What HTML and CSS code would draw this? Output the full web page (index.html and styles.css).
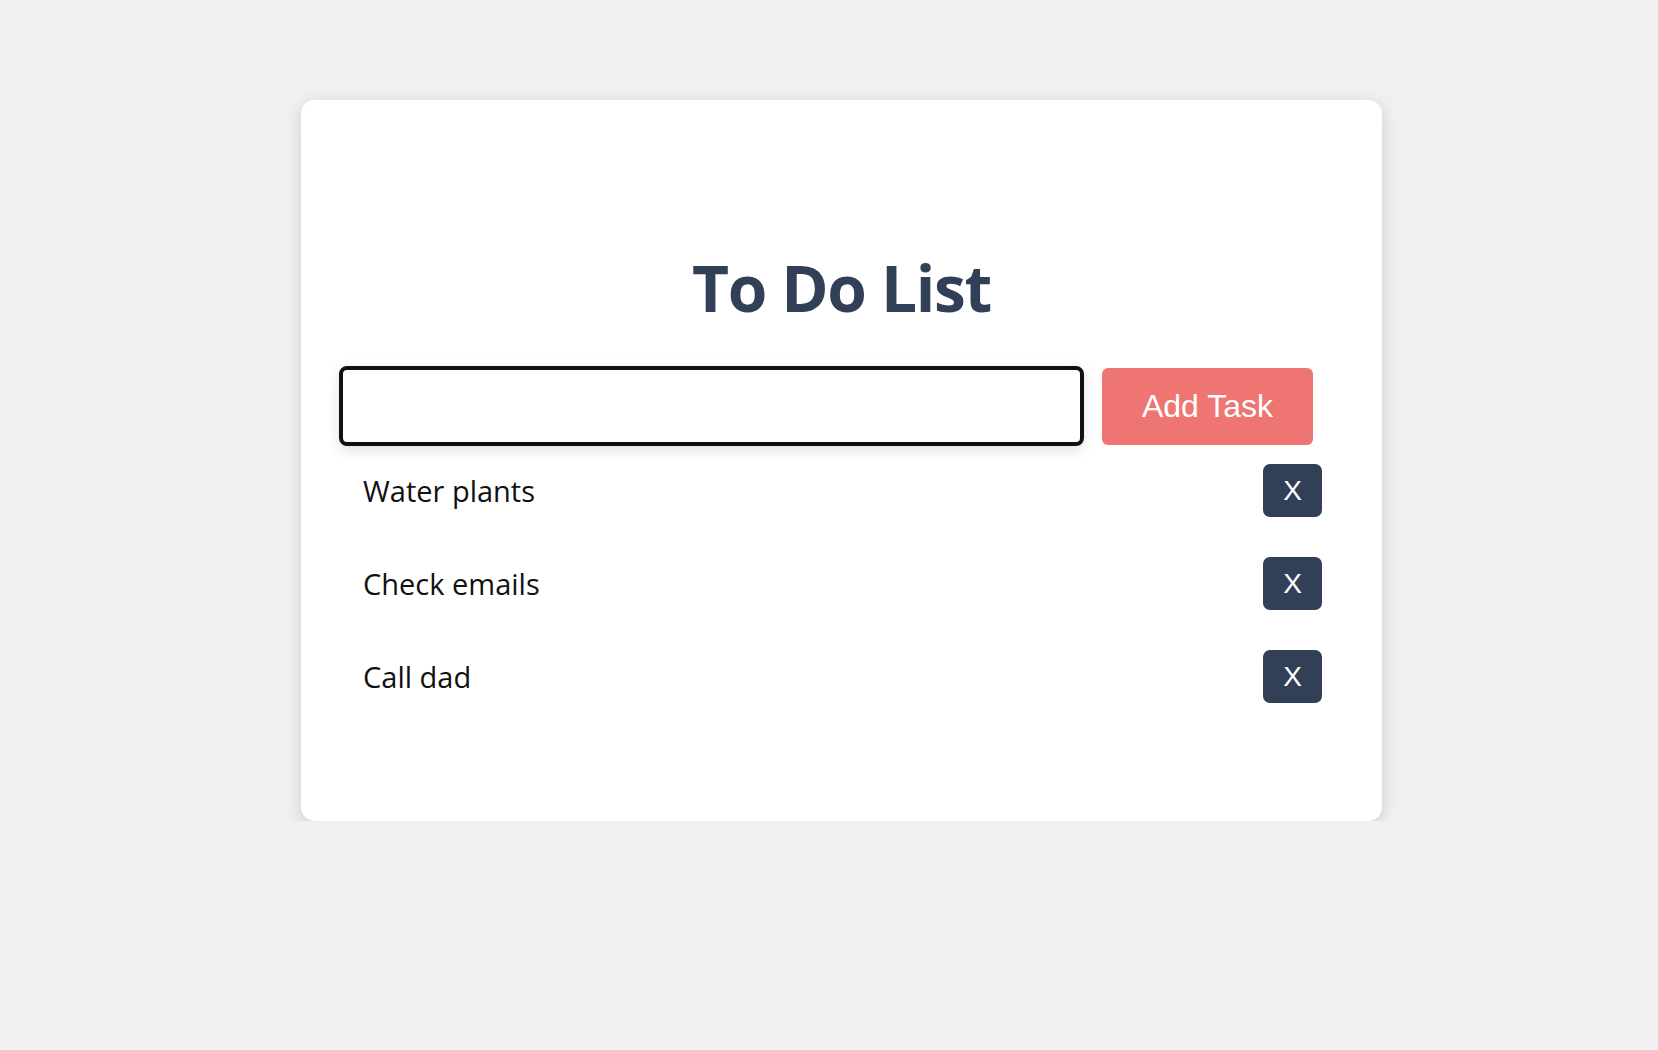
FILE: index.html
```html
<!DOCTYPE html>
<html lang="en">
<head>
<meta charset="utf-8">
<title>To Do List</title>
<link rel="stylesheet" href="styles.css">
</head>
<body>
<div class="card">
  <h1 class="title">To Do List</h1>
  <div class="add-row">
    <input class="task-input" type="text">
    <button class="add-btn">Add Task</button>
  </div>
  <ul class="tasks">
    <li class="task"><span class="task-text">Water plants</span><button class="del-btn">X</button></li>
    <li class="task"><span class="task-text">Check emails</span><button class="del-btn">X</button></li>
    <li class="task"><span class="task-text">Call dad</span><button class="del-btn">X</button></li>
  </ul>
</div>
</body>
</html>
```

FILE: styles.css
```css
html, body {
  margin: 0;
  padding: 0;
}

body {
  background: #f0f0f0;
  font-family: "Open Sans", "Noto Sans", sans-serif;
}

.card {
  box-sizing: border-box;
  width: 1081px;
  height: 721px;
  margin: 100px 0 0 301px;
  padding: 156px 0 0 38px;
  background: #ffffff;
  border-radius: 14px;
  box-shadow: 0 4px 16px rgba(0, 0, 0, 0.15);
}

.title {
  margin: 0 38px 0 0;
  text-align: center;
  font-size: 64px;
  line-height: 1;
  font-weight: 700;
  letter-spacing: -1.3px;
  color: #313f57;
}

.add-row {
  display: flex;
  align-items: center;
  gap: 18px;
  margin-top: 46px;
}

.task-input {
  box-sizing: border-box;
  width: 745px;
  height: 80px;
  margin: 0;
  border: 4px solid #111111;
  border-radius: 8px;
  background: #ffffff;
  box-shadow: 0 4px 14px rgba(0, 0, 0, 0.12);
  outline: none;
}

.add-btn {
  box-sizing: border-box;
  width: 211px;
  height: 77px;
  margin: 0;
  border: none;
  border-radius: 6px;
  background: #ee7571;
  color: #ffffff;
  font-family: "Liberation Sans", Arial, sans-serif;
  font-size: 32px;
  padding: 0;
}

.tasks {
  list-style: none;
  margin: 18px 60px 0 24px;
  padding: 0;
  display: flex;
  flex-direction: column;
  gap: 40px;
}

.task {
  display: flex;
  align-items: center;
  justify-content: space-between;
  height: 53px;
}

.task-text {
  font-size: 29px;
  line-height: 53px;
  color: #111111;
}

.del-btn {
  box-sizing: border-box;
  width: 59px;
  height: 53px;
  margin: 0;
  padding: 0;
  border: none;
  border-radius: 7px;
  background: #313f57;
  color: #ffffff;
  font-family: "Liberation Sans", Arial, sans-serif;
  font-size: 28px;
}
```
